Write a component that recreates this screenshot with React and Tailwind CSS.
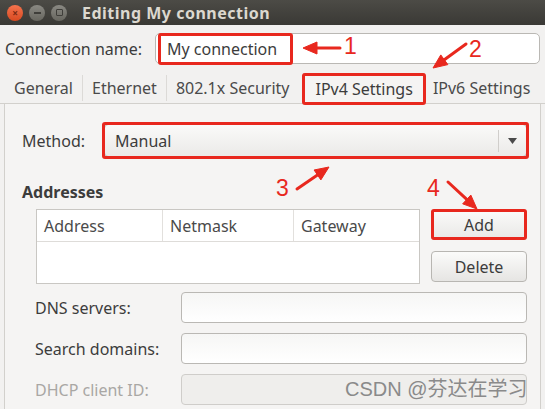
import React from 'react'

const font = { fontFamily: '"Noto Sans", "Open Sans", sans-serif' }

function Arrow({ x1, y1, x2, y2 }) {
  // red annotation arrow, head at (x2, y2)
  const dx = x2 - x1
  const dy = y2 - y1
  const len = Math.sqrt(dx * dx + dy * dy)
  const ux = dx / len
  const uy = dy / len
  const hx = x2 - ux * 14
  const hy = y2 - uy * 14
  const px = -uy * 6
  const py = ux * 6
  return (
    <g fill="#e8281e" stroke="#e8281e">
      <path d={`M${x1} ${y1} L${hx} ${hy}`} strokeWidth="3" strokeLinecap="round" />
      <path d={`M${x2} ${y2} L${hx + px} ${hy + py} L${hx - px} ${hy - py} Z`} strokeWidth="1" />
    </g>
  )
}

function TitleButton({ color, children }) {
  return (
    <div className={`w-[16px] h-[16px] rounded-full flex items-center justify-center ${color}`}>
      {children}
    </div>
  )
}

function TextField({ disabled, className = '' }) {
  return (
    <div
      className={`h-[31px] rounded-[4px] border ${
        disabled ? 'border-[#cfcdca] bg-[#efeeec]' : 'border-[#bab8b4] bg-gradient-to-b from-[#f6f6f5] to-white'
      } ${className}`}
    />
  )
}

function Tab({ children, divider = true }) {
  return (
    <div className="flex items-center h-full">
      <span className="px-[9px] text-[16px] text-[#4a4a4a]">{children}</span>
      {divider && <span className="w-px h-[26px] bg-[#dcdad7]" />}
    </div>
  )
}

export default function App() {
  return (
    <div className="relative w-[545px] h-[409px] overflow-hidden bg-[#f2f1f0]" style={font}>
      {/* Title bar */}
      <div className="h-[25px] flex items-center bg-gradient-to-b from-[#4c4b46] to-[#3a3935] pl-[7px]">
        <div className="flex items-center gap-[6px]">
          <TitleButton color="bg-gradient-to-b from-[#f4734d] to-[#d8491f]">
            <span className="text-[10px] leading-none font-bold text-[#7a2a12]">×</span>
          </TitleButton>
          <TitleButton color="bg-gradient-to-b from-[#8a8983] to-[#67665f]">
            <span className="w-[7px] h-[2px] bg-[#3f3e3a]" />
          </TitleButton>
          <TitleButton color="bg-gradient-to-b from-[#8a8983] to-[#67665f]">
            <span className="w-[7px] h-[7px] border border-[#3f3e3a] rounded-[1px]" />
          </TitleButton>
        </div>
        <span className="ml-[15px] text-[16px] font-bold text-[#dcd8cf] tracking-[0.5px]">Editing My connection</span>
      </div>

      {/* Connection name */}
      <div className="flex items-center mt-[8px] h-[31px]">
        <span className="pl-[5px] w-[155px] text-[16px] text-[#3c3c3c]">Connection name:</span>
        <div className="relative flex-1 mr-[5px] h-[31px] rounded-[5px] border border-[#bab8b4] bg-white flex items-center pl-[11px]">
          <span className="text-[16px] text-[#3c3c3c]">My connection</span>
          <div className="absolute left-[2px] top-[-1px] w-[135px] h-[32px] border-[3px] border-[#e8281e] rounded-[3px]" />
        </div>
      </div>

      {/* Tabs */}
      <div className="flex items-end h-[40px] pl-[5px] pt-[9px] border-b border-[#d2d0cc]">
        <div className="flex items-center h-[30px]">
          <Tab>General</Tab>
          <Tab>Ethernet</Tab>
          <Tab divider={false}>802.1x Security</Tab>
          <div className="relative h-[31px] ml-[5px] px-[11px] flex items-center bg-[#f5f4f3] border border-b-0 border-[#d2d0cc] mb-[-1px]">
            <span className="text-[16px] text-[#3c3c3c]">IPv4 Settings</span>
            <div className="absolute left-[-2px] right-[-2px] top-[-1px] bottom-[-1px] border-[3px] border-[#e8281e] rounded-[3px]" />
          </div>
          <span className="pl-[8px] text-[16px] text-[#4a4a4a] whitespace-nowrap">IPv6 Settings</span>
        </div>
      </div>

      {/* Panel */}
      <div className="ml-[4px] mr-[4px] h-[320px] border-l border-r border-[#d2d0cc] bg-[#f5f4f3] pl-[17px] pr-[13px]">
        {/* Method */}
        <div className="flex items-center pt-[20px]">
          <span className="w-[82px] text-[16px] text-[#3c3c3c]">Method:</span>
          <div className="relative flex-1 h-[33px] rounded-[4px] border border-[#bab8b4] bg-gradient-to-b from-[#fafaf9] to-[#ebeae8] flex items-center">
            <span className="flex-1 pl-[10px] text-[16px] text-[#3c3c3c]">Manual</span>
            <span className="w-px h-[22px] bg-[#d0cecb]" />
            <span className="w-[27px] flex justify-center">
              <svg width="9" height="6" viewBox="0 0 9 6">
                <path d="M0 0 L9 0 L4.5 6 Z" fill="#4a4a4a" />
              </svg>
            </span>
            <div className="absolute left-[-3px] right-[-3px] top-[-3px] bottom-[-3px] border-[3px] border-[#e8281e] rounded-[3px]" />
          </div>
        </div>

        {/* Addresses */}
        <div className="mt-[23px] text-[16px] font-bold text-[#3c3c3c]">Addresses</div>
        <div className="flex mt-[5px] pl-[14px] gap-[11px]">
          <div className="w-[384px] h-[75px] border border-[#c9c7c3] bg-white">
            <div className="flex h-[32px] border-b border-[#dedcd9] text-[16px] text-[#4a4a4a]">
              <div className="w-[126px] pl-[7px] flex items-center border-r border-[#e2e0dd]">Address</div>
              <div className="w-[131px] pl-[7px] flex items-center border-r border-[#e2e0dd]">Netmask</div>
              <div className="flex-1 pl-[7px] flex items-center">Gateway</div>
            </div>
          </div>
          <div className="flex flex-col w-[96px]">
            <div className="relative h-[31px] rounded-[4px] border border-[#b8b6b2] bg-gradient-to-b from-[#fbfbfa] to-[#e9e8e6] flex items-center justify-center">
              <span className="text-[16px] text-[#3c3c3c]">Add</span>
              <div className="absolute left-[-1px] right-[-1px] top-[-1px] bottom-[-1px] border-[3px] border-[#e8281e] rounded-[3px]" />
            </div>
            <div className="mt-[11px] h-[31px] rounded-[4px] border border-[#b8b6b2] bg-gradient-to-b from-[#fbfbfa] to-[#e6e5e3] flex items-center justify-center">
              <span className="text-[16px] text-[#3c3c3c]">Delete</span>
            </div>
          </div>
        </div>

        {/* DNS etc */}
        <div className="flex flex-col gap-[10px] mt-[8px] pl-[13px]">
          <div className="flex items-center">
            <span className="w-[146px] text-[16px] text-[#3c3c3c]">DNS servers:</span>
            <TextField className="flex-1" />
          </div>
          <div className="flex items-center">
            <span className="w-[146px] text-[16px] text-[#3c3c3c]">Search domains:</span>
            <TextField className="flex-1" />
          </div>
          <div className="flex items-center">
            <span className="w-[146px] text-[16px] text-[#a9a7a4]">DHCP client ID:</span>
            <TextField className="flex-1" disabled />
          </div>
        </div>
      </div>

      {/* Annotations */}
      <svg className="absolute left-0 top-0 pointer-events-none" width="545" height="409">
        <Arrow x1={340} y1={48} x2={303} y2={48} />
        <Arrow x1={466} y1={44} x2={433} y2={68} />
        <Arrow x1={297} y1={189} x2={329} y2={167} />
        <Arrow x1={448} y1={182} x2={477} y2={209} />
      </svg>
      <span className="absolute left-[344px] top-[35px] text-[23px] leading-none text-[#e8281e]" style={{ fontFamily: '"Liberation Sans", sans-serif' }}>1</span>
      <span className="absolute left-[469px] top-[38px] text-[23px] leading-none text-[#e8281e]" style={{ fontFamily: '"Liberation Sans", sans-serif' }}>2</span>
      <span className="absolute left-[276px] top-[177px] text-[23px] leading-none text-[#e8281e]" style={{ fontFamily: '"Liberation Sans", sans-serif' }}>3</span>
      <span className="absolute left-[427px] top-[177px] text-[23px] leading-none text-[#e8281e]" style={{ fontFamily: '"Liberation Sans", sans-serif' }}>4</span>

      {/* Watermark */}
      <span className="absolute left-[345px] top-[379px] text-[20px] leading-none text-[#8a8a8a]" style={{ fontFamily: '"Liberation Sans", "Noto Sans CJK SC", sans-serif' }}>
        CSDN @芬达在学习
      </span>
    </div>
  )
}
